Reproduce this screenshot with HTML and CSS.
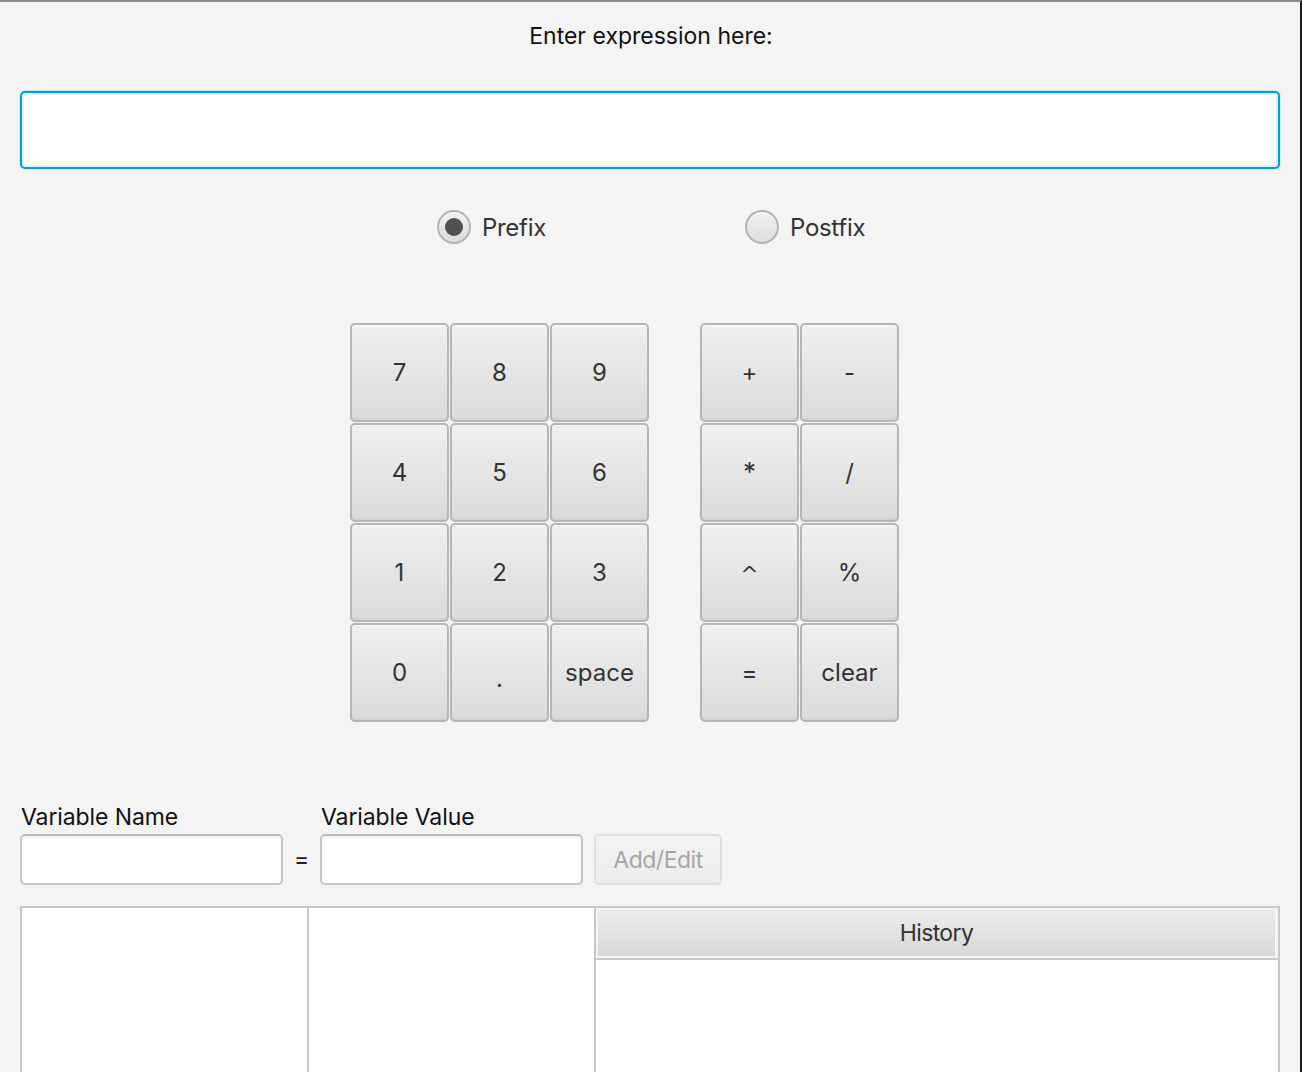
FILE: index.html
```html
<!DOCTYPE html>
<html>
<head>
<meta charset="utf-8">
<link rel="stylesheet" href="styles.css">
</head>
<body>
<div class="window">
  <div class="title">Enter expression here:</div>
  <div class="expr-wrap"><input class="expr" type="text"></div>
  <div class="radios">
    <label class="radio"><span class="ring selected"><span class="dot"></span></span><span class="rlabel">Prefix</span></label>
    <label class="radio"><span class="ring"></span><span class="rlabel">Postfix</span></label>
  </div>
  <div class="pads">
    <div class="pad digits">
      <button class="key">7</button><button class="key">8</button><button class="key">9</button>
      <button class="key">4</button><button class="key">5</button><button class="key">6</button>
      <button class="key">1</button><button class="key">2</button><button class="key">3</button>
      <button class="key">0</button><button class="key dotkey">.</button><button class="key">space</button>
    </div>
    <div class="pad ops">
      <button class="key">+</button><button class="key">-</button>
      <button class="key star">*</button><button class="key">/</button>
      <button class="key caret">^</button><button class="key">%</button>
      <button class="key">=</button><button class="key">clear</button>
    </div>
  </div>
  <div class="vars">
    <div class="vcol">
      <div class="vlabel">Variable Name</div>
      <div class="field"></div>
    </div>
    <div class="eq">=</div>
    <div class="vcol">
      <div class="vlabel">Variable Value</div>
      <div class="field"></div>
    </div>
    <button class="addedit" disabled>Add/Edit</button>
  </div>
  <div class="lists">
    <div class="list"></div>
    <div class="list"></div>
    <div class="table">
      <div class="thead"><div class="th">History</div></div>
      <div class="tbody"></div>
    </div>
  </div>
</div>
</body>
</html>
```
FILE: styles.css
```css
html, body {
  margin: 0;
  padding: 0;
  background: #f4f4f4;
  overflow: hidden;
}
.window {
  width: 1300px;
  height: 1070px;
  border-top: 2px solid #8c8c8c;
  border-right: 2px solid #1a1a1a;
  box-sizing: content-box;
  font-family: Inter, "Open Sans", sans-serif;
  color: #333;
  display: flex;
  flex-direction: column;
  overflow: hidden;
}
.title {
  text-align: center;
  font-size: 23px;
  color: #111;
  height: 30px;
  line-height: 30px;
  margin-top: 19px;
  padding-left: 2px;
}
.expr-wrap {
  margin: 40px 20px 0 20px;
  height: 78px;
}
.expr {
  display: block;
  width: 100%;
  height: 78px;
  box-sizing: border-box;
  border: 2px solid #039ed3;
  border-radius: 5px;
  background: #fff;
  box-shadow: 0 0 0 1px #cfe9f4, inset 0 0 0 2px #dff1f9;
  outline: none;
}
.radios {
  display: flex;
  justify-content: center;
  margin-top: 40px;
  height: 36px;
  padding-left: 32px;
}
.radio {
  display: flex;
  align-items: center;
  width: 308px;
}
.radio:last-child { width: 150px; }
.ring {
  width: 34px;
  height: 34px;
  box-sizing: border-box;
  border-radius: 50%;
  border: 2px solid #b4b4b4;
  background: linear-gradient(#f2f2f2, #dcdcdc);
  box-shadow: inset 0 1px 0 #fafafa;
  display: flex;
  align-items: center;
  justify-content: center;
  flex: none;
}
.dot {
  width: 18px;
  height: 18px;
  border-radius: 50%;
  background: #505050;
}
.rlabel {
  font-size: 24px;
  margin-left: 11px;
  color: #333;
  letter-spacing: -0.3px;
}
.pads {
  display: flex;
  justify-content: center;
  gap: 50px;
  margin-top: 78px;
  padding-right: 50px;
}
.pad {
  display: grid;
  grid-auto-rows: 100px;
}
.digits { grid-template-columns: repeat(3, 100px); }
.ops { grid-template-columns: repeat(2, 100px); }
.key {
  margin: 0 1px 1px 0;
  border: 2px solid #b5b5b5;
  border-radius: 5px;
  background: linear-gradient(#f0f0f0, #dadada);
  box-shadow: inset 0 1px 0 #fbfbfb, inset 0 -2px 0 #d2d2d2;
  font-family: Inter, "Open Sans", sans-serif;
  font-size: 24px;
  color: #333;
  padding: 0;
}
.key.star { font-size: 26px; padding-bottom: 2px; }
.key.caret { font-family: "DejaVu Sans", sans-serif; font-size: 22px; padding-top: 4px; }
.dotkey { padding-top: 12px; }
.vars {
  display: flex;
  align-items: flex-end;
  margin: 80px 0 0 20px;
}
.vcol { display: flex; flex-direction: column; }
.vlabel {
  font-size: 23px;
  color: #111;
  letter-spacing: -0.1px;
  line-height: 28px;
  margin-left: 1px;
  margin-bottom: 3px;
}
.field {
  width: 263px;
  height: 51px;
  box-sizing: border-box;
  border: 2px solid #c6c6c6;
  border-top-color: #bcbcbc;
  border-radius: 5px;
  background: #fff;
  box-shadow: inset 0 2px 2px #f1f1f1;
}
.eq {
  width: 37px;
  text-align: center;
  font-size: 23px;
  color: #222;
  line-height: 51px;
  height: 51px;
}
.addedit {
  margin-left: 11px;
  width: 128px;
  height: 51px;
  border: 2px solid #dedede;
  border-radius: 5px;
  background: linear-gradient(#f3f3f3, #ececec);
  font-family: Inter, "Open Sans", sans-serif;
  font-size: 23px;
  letter-spacing: -0.5px;
  color: #a6a6a6;
  padding: 0;
}
.lists {
  display: flex;
  margin: 21px 20px 0 20px;
  flex: 1;
}
.list {
  width: 287px;
  box-sizing: border-box;
  border: 2px solid #c8c8c8;
  border-bottom: none;
  border-right: none;
  background: #fff;
}
.table {
  flex: 1;
  border: 2px solid #c8c8c8;
  border-bottom: none;
  display: flex;
  flex-direction: column;
  background: #fff;
}
.thead {
  height: 52px;
  box-sizing: border-box;
  border-bottom: 2px solid #c8c8c8;
  background: #f4f4f4;
  padding: 1px 2px 1px 1px;
}
.th {
  height: 100%;
  background: linear-gradient(#ececec, #d8d8d8);
  border: 1px solid #f4f4f4;
  box-sizing: border-box;
  display: flex;
  align-items: center;
  justify-content: center;
  font-size: 23px;
  letter-spacing: -0.6px;
  color: #333;
}
.tbody { flex: 1; background: #fff; }
```
